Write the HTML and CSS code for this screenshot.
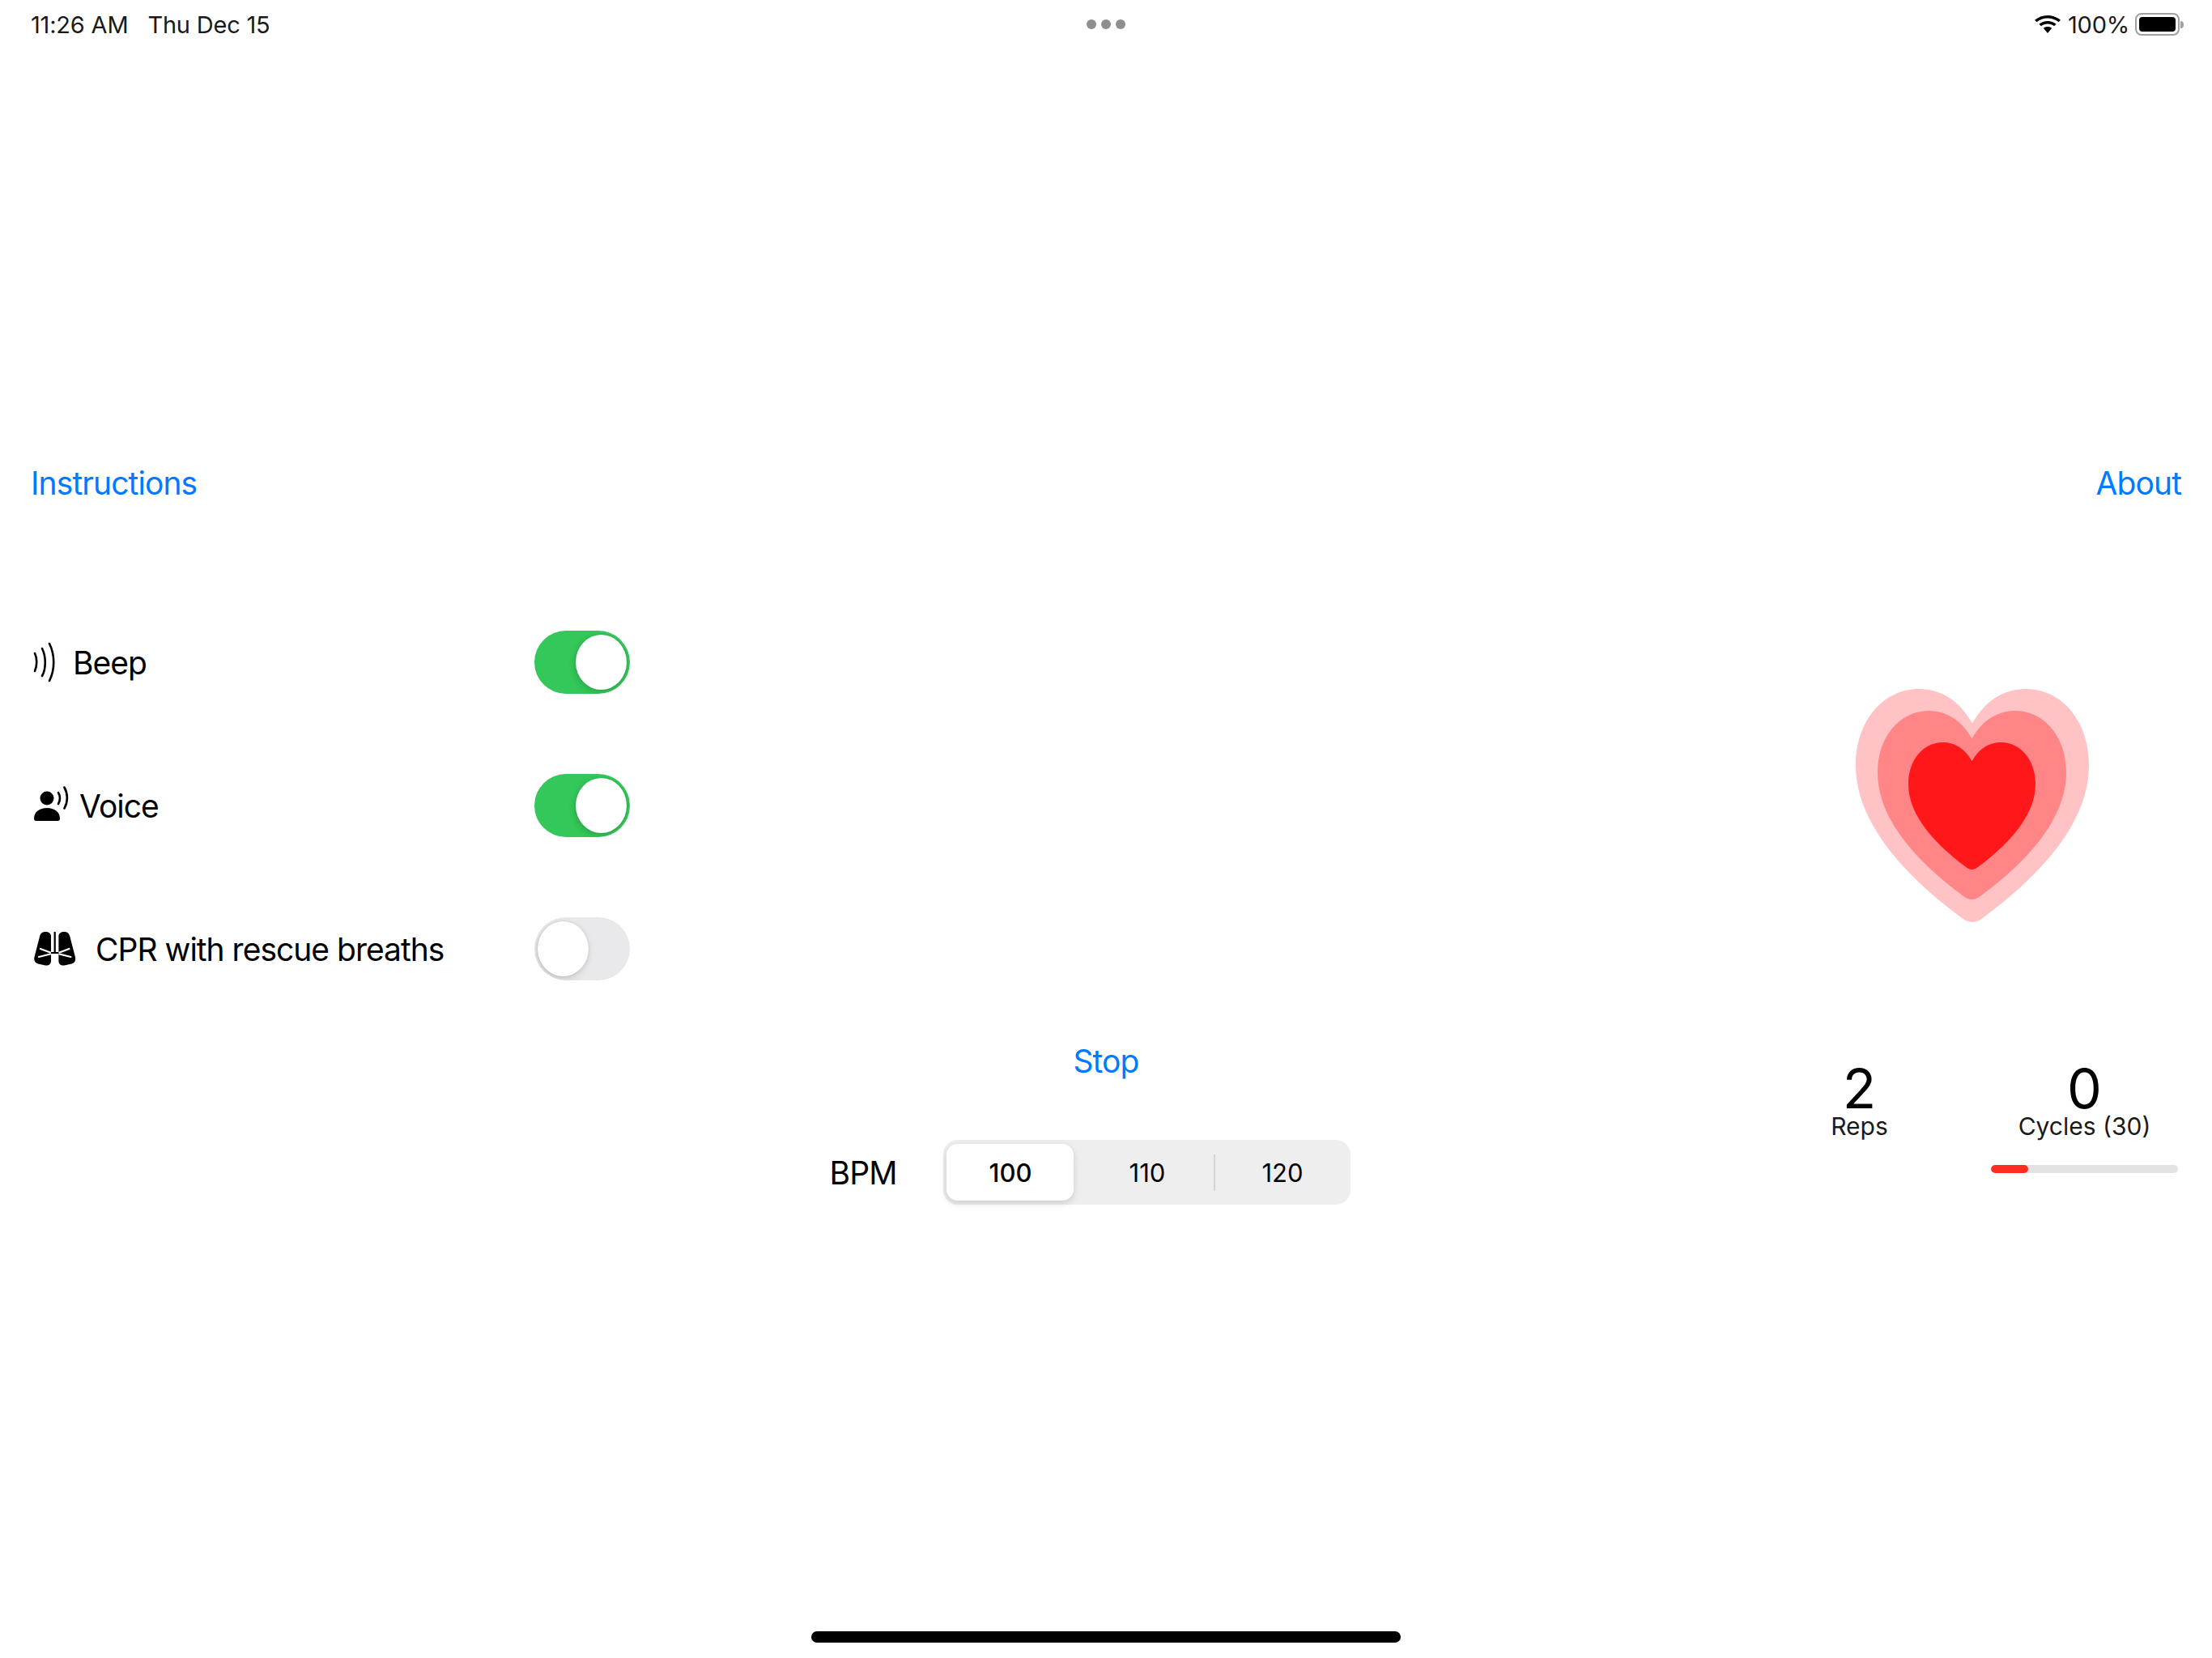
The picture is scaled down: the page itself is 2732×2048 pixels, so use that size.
FILE: index.html
```html
<!DOCTYPE html>
<html lang="en">
<head>
    <meta charset="UTF-8">
    <meta name="viewport" content="width=device-width, initial-scale=1.0">
    <title>CPR Metronome</title>
    <link rel="stylesheet" href="styles.css">
</head>
<body>
    <svg class="defs" width="0" height="0">
        <defs>
            <path id="heart" d="M50 14.8C44.5 5 36.5 0 27.2 0 11.5 0 0 14 0 32.8 0 58 22 81 46 98.6 47.3 99.5 48.8 100 50 100 51.2 100 52.7 99.5 54 98.6 78 81 100 58 100 32.8 100 14 88.5 0 72.8 0 63.5 0 55.5 5 50 14.8Z"/>
            <path id="lobe" d="M21 5C21 2 18 0 14 0 10 0 8 2 7 6L.5 31C-.5 35 1 38.500 5 39.500L14 41.500C18 42 21 40 21 36Z"/>
        </defs>
    </svg>

    <div class="page">
        <!-- Status bar -->
        <div class="status-bar">
            <div class="status-time"><span>11:26 AM</span><span>Thu Dec 15</span></div>
            <div class="status-dots"><i></i><i></i><i></i></div>
            <div class="status-right">
                <svg class="wifi" viewBox="2 0 28 24" width="32" height="24" preserveAspectRatio="none">
                    <path d="M16 4.500c4.600 0 8.700 1.800 11.800 4.700L30 6.800C26.300 3.300 21.400 1 16 1S5.700 3.300 2 6.800l2.200 2.400C7.300 6.300 11.400 4.500 16 4.500z"/>
                    <path d="M16 11.500c2.700 0 5.100 1 7 2.700l2.300-2.500C22.800 9.400 19.500 8 16 8s-6.800 1.400-9.300 3.700l2.300 2.500c1.900-1.700 4.300-2.700 7-2.700z"/>
                    <path d="M16 15c-1.800 0-3.300.7-4.500 1.700L16 23l4.500-6.300C19.300 15.700 17.800 15 16 15z"/>
                </svg>
                <span class="status-pct">100%</span>
                <div class="battery"><div class="battery-fill"></div></div>
                <div class="battery-tip"></div>
            </div>
        </div>

        <!-- Top links -->
        <div class="nav">
            <span class="link">Instructions</span>
            <span class="link">About</span>
        </div>

        <div class="main">
            <!-- Settings -->
            <div class="settings">
                <div class="row">
                    <div class="row-label beep">
                        <svg class="icon" viewBox="0 0 30 50" width="30" height="50" fill="none" stroke="#000" stroke-width="2.600" stroke-linecap="round">
                            <path d="M2 14c3 6 3 15 0 22"/>
                            <path d="M11 8c5 10 5 25 0 34"/>
                            <path d="M20 2c7 14 7 32 0 46"/>
                        </svg>
                        <span>Beep</span>
                    </div>
                    <div class="toggle on"><div class="thumb"></div></div>
                </div>
                <div class="row">
                    <div class="row-label voice">
                        <svg class="icon" viewBox="0 0 44 43" width="44" height="43">
                            <circle cx="16" cy="15" r="8.500"/>
                            <path d="M0 40c0-8 7-13 16-13s16 5 16 13c0 2-1 3-2.500 3H2.500C1 43 0 42 0 40z"/>
                            <g fill="none" stroke="#000" stroke-width="2.600" stroke-linecap="round">
                                <path d="M30 8c2.600 4 2.600 10 0 14"/>
                                <path d="M37.500 1.500c4.500 8 4.500 18 0 26"/>
                            </g>
                        </svg>
                        <span>Voice</span>
                    </div>
                    <div class="toggle on"><div class="thumb"></div></div>
                </div>
                <div class="row">
                    <div class="row-label lungs">
                        <svg class="icon" viewBox="0 0 52 42" width="52" height="42">
                            <use href="#lobe"/>
                            <use href="#lobe" transform="matrix(-1 0 0 1 51.400 0)"/>
                            <rect x="24.600" y="0" width="2.200" height="26"/>
                            <rect x="19" y="25" width="13.400" height="2"/>
                            <g fill="none" stroke="#fff" stroke-width="2.200" stroke-linecap="round">
                                <path d="M20 25.500L8 21"/>
                                <path d="M20 27.500L6 31"/>
                                <path d="M31.400 25.500l12-4.500"/>
                                <path d="M31.400 27.500l14 3.500"/>
                            </g>
                        </svg>
                        <span>CPR with rescue breaths</span>
                    </div>
                    <div class="toggle"><div class="thumb"></div></div>
                </div>
            </div>

            <!-- Stop and speed -->
            <div class="controls">
                <span class="link stop">Stop</span>
                <div class="bpm">
                    <span class="bpm-label">BPM</span>
                    <div class="segments">
                        <div class="segment selected">100</div>
                        <div class="segment">110</div>
                        <div class="segment divided">120</div>
                    </div>
                </div>
            </div>

            <!-- Heart and counters -->
            <div class="counters">
                <svg class="big-heart" viewBox="0 0 288 288" width="288" height="288">
                    <use href="#heart" transform="scale(2.880)" fill="#ffc3c5"/>
                    <use href="#heart" transform="translate(27 27) scale(2.330)" fill="#ff8587"/>
                    <use href="#heart" transform="translate(65 66) scale(1.570)" fill="#ff1719"/>
                </svg>
                <div class="stats">
                    <div class="stat">
                        <div class="stat-num">2</div>
                        <div class="stat-label">Reps</div>
                    </div>
                    <div class="stat">
                        <div class="stat-num">0</div>
                        <div class="stat-label">Cycles (30)</div>
                        <div class="progress"><div class="progress-bar" style="width: 20%"></div></div>
                    </div>
                </div>
            </div>
        </div>

        <div class="home-bar"></div>
    </div>
</body>
</html>
```

FILE: styles.css
```css
* {
    margin: 0;
    padding: 0;
    box-sizing: border-box;
}

html, body {
    width: 2732px;
    height: 2048px;
    overflow: hidden;
    background: #fff;
}

body {
    font-family: 'Inter', 'Liberation Sans', sans-serif;
    color: #000;
}

.defs {
    display: block;
    height: 0;
}

.page {
    height: 2048px;
    display: flex;
    flex-direction: column;
}

.status-bar {
    height: 60px;
    padding: 0 38px;
    display: grid;
    grid-template-columns: 1fr auto 1fr;
    align-items: center;
    font-size: 29px;
    letter-spacing: -0.2px;
    color: #1a1a1a;
}

.status-time {
    display: flex;
    gap: 24px;
}

.status-dots {
    display: flex;
    gap: 6px;
}

.status-dots i {
    width: 12px;
    height: 12px;
    border-radius: 50%;
    background: #8e8e8e;
}

.status-right {
    display: flex;
    align-items: center;
    justify-content: flex-end;
}

.wifi {
    margin-right: 9px;
}

.status-pct {
    margin-right: 7px;
}

.battery {
    width: 55px;
    height: 28px;
    padding: 3px;
    border: 2px solid #a0a0a0;
    border-radius: 8px;
}

.battery-fill {
    height: 100%;
    background: #000;
    border-radius: 4px;
}

.battery-tip {
    width: 4px;
    height: 9px;
    margin-left: 1px;
    margin-right: -3px;
    background: #a0a0a0;
    border-radius: 0 4px 4px 0;
}

.link {
    color: #007aff;
    font-size: 39px;
    line-height: 48px;
    letter-spacing: -0.9px;
}

.nav {
    margin-top: 513px;
    padding: 0 38px;
    display: flex;
    justify-content: space-between;
}

.main {
    margin-top: 158px;
    padding-left: 38px;
    display: grid;
    grid-template-columns: 740px 1176px 1fr;
    height: 709px;
}

.settings {
    display: flex;
    flex-direction: column;
    gap: 99px;
}

.row {
    height: 78px;
    display: flex;
    justify-content: space-between;
    align-items: center;
}

.row-label {
    display: flex;
    align-items: center;
    font-size: 39px;
    letter-spacing: -1px;
}

.icon {
    flex-shrink: 0;
    margin-left: 3px;
}

.beep .icon {
    margin-right: 19px;
}

.voice .icon {
    margin-left: 4px;
    margin-right: 12px;
    margin-bottom: 6px;
}

.lungs .icon {
    margin-left: 4px;
    margin-right: 24px;
}

.toggle {
    width: 118px;
    height: 78px;
    padding: 5px 4px;
    border-radius: 39px;
    background: #e9e9eb;
    display: flex;
    overflow: hidden;
}

.toggle.on {
    background: #34c759;
    justify-content: flex-end;
}

.thumb {
    width: 63px;
    height: 68px;
    border-radius: 50%;
    background: #fff;
    box-shadow: -1px 3px 9px rgba(0, 0, 0, 0.16), 0 0 2px rgba(0, 0, 0, 0.16);
}

.controls {
    display: flex;
    flex-direction: column;
    align-items: center;
    justify-content: flex-end;
}

.stop {
    margin-bottom: 73px;
}

.bpm {
    display: flex;
    align-items: center;
    margin-right: 39px;
}

.bpm-label {
    font-size: 39px;
    letter-spacing: -0.9px;
    margin-right: 58px;
}

.segments {
    width: 503px;
    height: 80px;
    padding: 5px 4px;
    display: flex;
    background: #eeeeef;
    border-radius: 18px;
    font-size: 31px;
}

.segment {
    flex: 0 0 165px;
    display: flex;
    align-items: center;
    justify-content: center;
    position: relative;
    border-radius: 14px;
}

.segment.selected {
    flex-basis: 157px;
    margin-right: 8px;
    background: #fff;
    font-weight: 500;
    box-shadow: 0 3px 8px rgba(0, 0, 0, 0.15);
}

.segment.divided {
    padding-left: 4px;
}

.segment.divided::before {
    content: "";
    position: absolute;
    left: 0;
    top: 13px;
    bottom: 12px;
    width: 2px;
    background: #d4d4d6;
}

.counters {
    justify-self: end;
    width: 509px;
    margin-right: 42px;
    display: flex;
    flex-direction: column;
    align-items: center;
}

.big-heart {
    margin-top: 72px;
    display: block;
}

.stats {
    margin-top: 174px;
    width: 100%;
    display: flex;
    gap: 47px;
}

.stat {
    width: 231px;
    text-align: center;
}

.stat-num {
    font-size: 68px;
    line-height: 63px;
}

.stat-label {
    font-size: 30px;
    line-height: 30px;
    color: #1a1a1a;
}

.progress {
    margin-top: 33px;
    height: 10px;
    background: #e3e3e5;
    border-radius: 5px;
    overflow: hidden;
}

.progress-bar {
    height: 100%;
    background: #ff2d20;
    border-radius: 5px;
}

.home-bar {
    width: 728px;
    height: 14px;
    margin: auto auto 19px;
    background: #000;
    border-radius: 7px;
}
```
